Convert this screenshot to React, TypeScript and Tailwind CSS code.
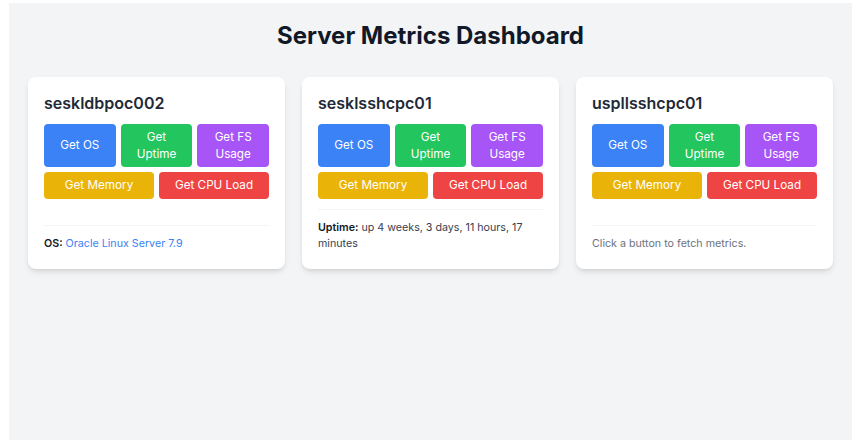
const servers = [
  { name: "seskldbpoc002", result: { label: "OS:", value: "Oracle Linux Server 7.9", link: true } },
  { name: "sesklsshcpc01", result: { label: "Uptime:", value: "up 4 weeks, 3 days, 11 hours, 17 minutes", link: false } },
  { name: "uspllsshcpc01", result: null },
];

type Result = { label: string; value: string; link: boolean } | null;

function ServerCard({ name, result }: { name: string; result: Result }) {
  return (
    <div className="flex flex-col rounded-lg bg-white px-4 pt-[14px] pb-4 shadow-md">
      <h2 className="mb-[9px] text-[16px] font-semibold leading-6 text-[#1f2937]">{name}</h2>
      <div className="grid grid-cols-3 gap-[5px]">
        <button className="rounded-[4px] bg-[#3b82f6] py-[5px] text-[11.7px] leading-[16.5px] text-white">Get OS</button>
        <button className="rounded-[4px] bg-[#22c55e] py-[5px] text-[11.7px] leading-[16.5px] text-white">
          Get
          <br />
          Uptime
        </button>
        <button className="rounded-[4px] bg-[#a855f7] py-[5px] text-[11.7px] leading-[16.5px] text-white">
          Get FS
          <br />
          Usage
        </button>
      </div>
      <div className="mt-[5px] grid grid-cols-2 gap-[5px]">
        <button className="rounded-[4px] bg-[#eab308] py-[5px] text-[11.7px] leading-[16.5px] text-white">Get Memory</button>
        <button className="rounded-[4px] bg-[#ef4444] py-[5px] text-[11.7px] leading-[16.5px] text-white">Get CPU Load</button>
      </div>
      <div className="mt-auto pt-[10px]">
        <div className="border-t border-[#f3f4f6] pt-[10px] text-[10.7px] leading-[16.5px]">
          {result ? (
            <p className="text-[#374151]">
              <span className="font-semibold text-[#111827]">{result.label}</span>{" "}
              <span className={result.link ? "text-[#3b82f6]" : ""}>{result.value}</span>
            </p>
          ) : (
            <p className="text-[#6b7280]">Click a button to fetch metrics.</p>
          )}
        </div>
      </div>
    </div>
  );
}

export default function App() {
  return (
    <div className="h-[443px] bg-white pt-[3px] pl-[9px] font-['Inter',sans-serif]">
      <div className="h-[437px] w-[843px] bg-[#f3f4f6] px-[19px] pt-[17px]">
        <h1 className="mb-[25px] text-center text-[24px] font-bold leading-8 text-[#111827]">
          Server Metrics Dashboard
        </h1>
        <div className="grid grid-cols-3 items-stretch gap-[17px]">
          {servers.map((s) => (
            <ServerCard key={s.name} name={s.name} result={s.result} />
          ))}
        </div>
      </div>
    </div>
  );
}
